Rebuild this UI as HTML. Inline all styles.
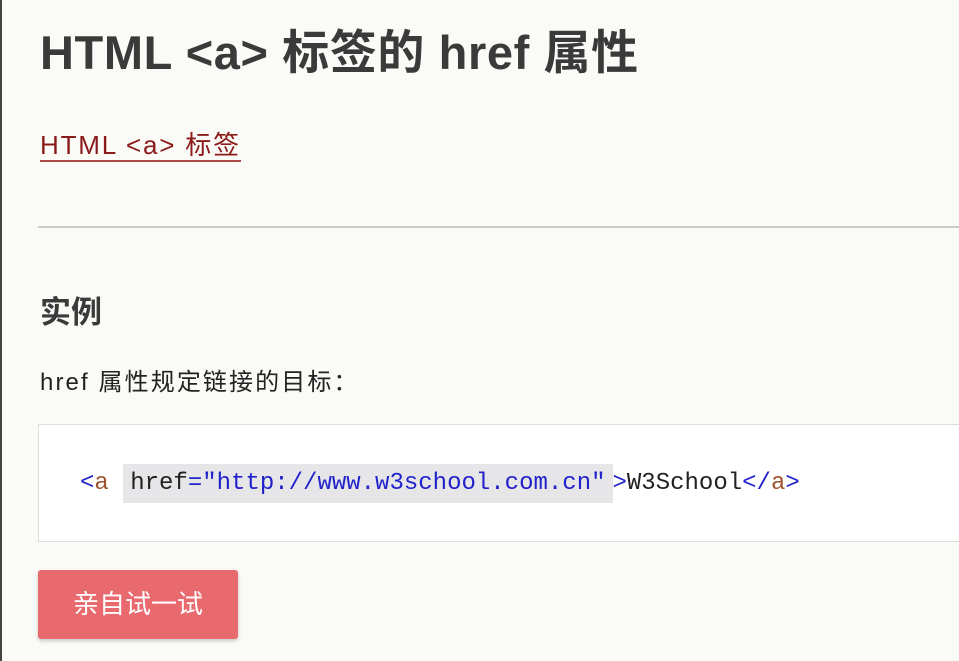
<!DOCTYPE html>
<html><head><meta charset="utf-8"><style>
body{margin:0;width:959px;height:661px;overflow:hidden;background:#fafaf7;font-family:"Liberation Sans","Noto Sans CJK SC",sans-serif;color:#333;position:relative;border-left:2px solid #444;box-sizing:border-box}
.a{position:absolute;white-space:nowrap}
h1{position:absolute;left:38px;top:14px;margin:0;font-size:47px;font-weight:bold;color:#3a3a3a;white-space:nowrap;letter-spacing:0.6px}
.lk{left:38px;top:130px;font-size:26px;letter-spacing:1.8px;color:#8b1a1a;border-bottom:2px solid #b34a4a;line-height:30px}
.hr{position:absolute;left:36px;right:0;top:226px;height:2px;background:#ccc}
.h2{left:38px;top:287px;font-size:31px;font-weight:bold;color:#3a3a3a}
.p{left:38px;top:362px;font-size:24px;letter-spacing:2.1px;color:#222}
.code{position:absolute;left:36px;right:-2px;top:424px;height:116px;background:#fff;border:1px solid #ddd}
.ct{left:78px;top:470px;font-family:"Liberation Mono",monospace;font-size:24px;color:#222}
.hl{background:#e6e6e8;padding:6px 7px}
.b{color:#2222cc}.r{color:#a0522d}
.btn{position:absolute;left:36px;top:570px;width:200px;height:69px;background:#e96a6e;border-radius:3px;box-shadow:0 2px 4px rgba(0,0,0,.2);color:#fff;font-size:26px;text-align:center;line-height:69px}
</style></head><body>
<h1>HTML &lt;a&gt; 标签的 href 属性</h1>
<div class="a lk">HTML &lt;a&gt; 标签</div>
<div class="hr"></div>
<div class="a h2">实例</div>
<div class="a p">href 属性规定链接的目标：</div>
<div class="code"></div>
<div class="a ct"><span class="b">&lt;</span><span class="r">a</span> <span class="hl">href<span class="b">="http://www.w3school.com.cn"</span></span><span class="b">&gt;</span>W3School<span class="b">&lt;/</span><span class="r">a</span><span class="b">&gt;</span></div>
<div class="btn">亲自试一试</div>
</body></html>
